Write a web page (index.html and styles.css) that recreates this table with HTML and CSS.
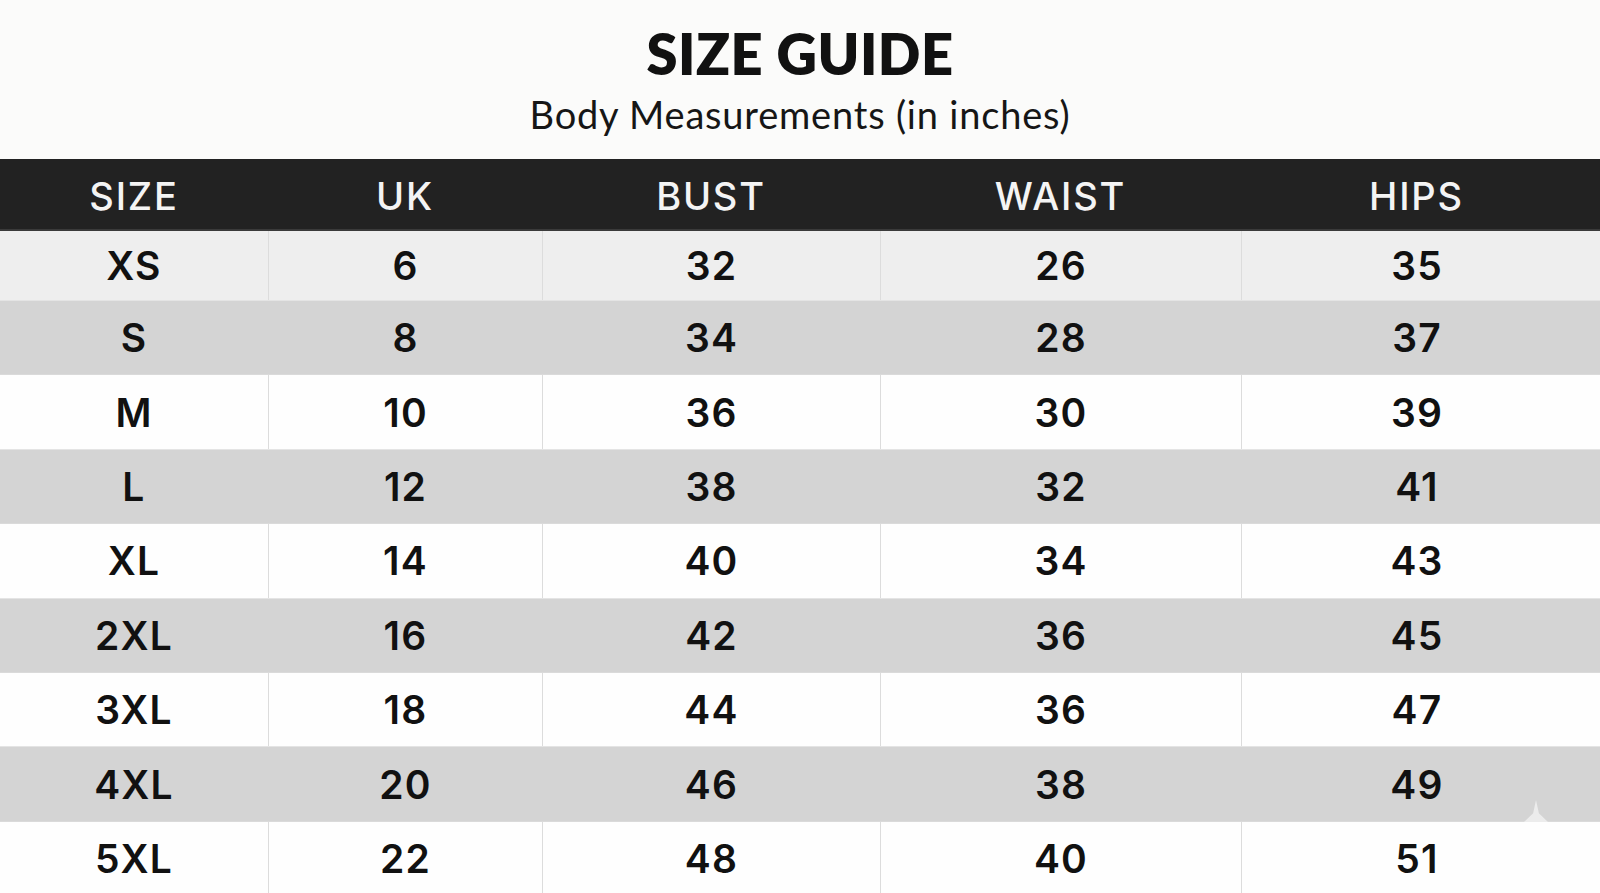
FILE: index.html
```html
<!DOCTYPE html>
<html lang="en">
<head>
<meta charset="utf-8">
<title>Size Guide</title>
<link rel="stylesheet" href="styles.css">
</head>
<body>
<header class="intro">
  <h1 class="title">SIZE GUIDE</h1>
  <p class="subtitle">Body Measurements (in inches)</p>
</header>
<div class="chart">
  <div class="row head">
    <div class="cell">SIZE</div><div class="cell">UK</div><div class="cell">BUST</div><div class="cell">WAIST</div><div class="cell">HIPS</div>
  </div>
  <div class="row first">
    <div class="cell">XS</div><div class="cell">6</div><div class="cell">32</div><div class="cell">26</div><div class="cell">35</div>
  </div>
  <div class="row grey">
    <div class="cell">S</div><div class="cell">8</div><div class="cell">34</div><div class="cell">28</div><div class="cell">37</div>
  </div>
  <div class="row">
    <div class="cell">M</div><div class="cell">10</div><div class="cell">36</div><div class="cell">30</div><div class="cell">39</div>
  </div>
  <div class="row grey">
    <div class="cell">L</div><div class="cell">12</div><div class="cell">38</div><div class="cell">32</div><div class="cell">41</div>
  </div>
  <div class="row">
    <div class="cell">XL</div><div class="cell">14</div><div class="cell">40</div><div class="cell">34</div><div class="cell">43</div>
  </div>
  <div class="row grey">
    <div class="cell">2XL</div><div class="cell">16</div><div class="cell">42</div><div class="cell">36</div><div class="cell">45</div>
  </div>
  <div class="row">
    <div class="cell">3XL</div><div class="cell">18</div><div class="cell">44</div><div class="cell">36</div><div class="cell">47</div>
  </div>
  <div class="row grey">
    <div class="cell">4XL</div><div class="cell">20</div><div class="cell">46</div><div class="cell">38</div><div class="cell">49</div>
  </div>
  <div class="row">
    <div class="cell">5XL</div><div class="cell">22</div><div class="cell">48</div><div class="cell">40</div><div class="cell">51</div>
  </div>
</div>
<span class="mark"></span>
</body>
</html>
```

FILE: styles.css
```css
html, body {
  margin: 0;
  padding: 0;
}
body {
  width: 1600px;
  height: 893px;
  overflow: hidden;
  background: #fbfbfa;
  position: relative;
}
.intro {
  height: 159px;
  box-sizing: border-box;
  padding-top: 23px;
  text-align: center;
  font-family: Lato, "Open Sans", sans-serif;
  color: #111;
}
.title {
  margin: 0;
  font-size: 56px;
  line-height: 62px;
  font-weight: 800;
  letter-spacing: 0.5px;
}
.subtitle {
  margin: 4px 0 0;
  font-size: 38px;
  line-height: 50px;
  font-weight: 400;
  letter-spacing: 0.8px;
  color: #161616;
}
.chart {
  font-family: Inter, "Noto Sans", sans-serif;
}
.row {
  display: grid;
  grid-template-columns: 268px 274px 338px 361px 1fr;
  height: 74.4px;
  background: #fefefe;
  border-bottom: 1px solid #e4e4e4;
  box-sizing: border-box;
}
.row.grey {
  background: #d4d4d4;
  border-bottom-color: #dadada;
}
.row.first {
  height: 70px;
  background: #eeeeee;
}
.row.head {
  height: 72px;
  background: #222222;
  border-bottom: 2px solid #3a3a3a;
}
.cell {
  display: flex;
  align-items: center;
  justify-content: center;
  font-size: 39px;
  font-weight: 600;
  color: #111;
  letter-spacing: 1.2px;
  border-left: 1px solid #dcdcdc;
}
.cell:first-child {
  border-left: none;
}
.cell:last-child {
  padding-right: 8px;
}
.row.grey .cell {
  border-left-color: transparent;
}
.row.head .cell {
  color: #f4f4f4;
  font-size: 38px;
  font-weight: 500;
  letter-spacing: 1.8px;
  border-left: none;
  padding-top: 4px;
}
.mark {
  position: absolute;
  left: 1524px;
  top: 800px;
  width: 24px;
  height: 22px;
  background: #ececec;
  clip-path: polygon(50% 0, 62% 60%, 100% 100%, 0 100%, 38% 60%);
}
```
